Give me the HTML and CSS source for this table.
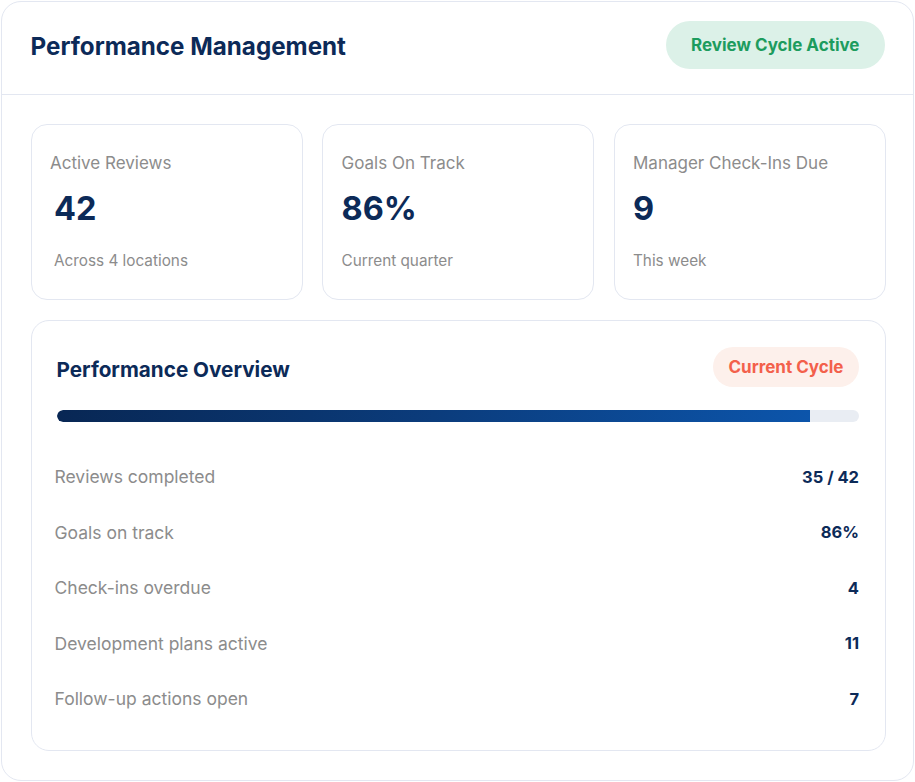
FILE: index.html
```html
<!DOCTYPE html>
<html lang="en">
<head>
<meta charset="utf-8">
<title>Performance Management</title>
<link rel="stylesheet" href="styles.css">
</head>
<body>
<div class="panel">
  <header class="panel-head">
    <h1 class="panel-title">Performance Management</h1>
    <span class="badge badge-green">Review Cycle Active</span>
  </header>
  <div class="panel-body">
    <div class="stats">
      <div class="stat stat-indent">
        <div class="stat-label">Active Reviews</div>
        <div class="stat-value">42</div>
        <div class="stat-sub">Across 4 locations</div>
      </div>
      <div class="stat">
        <div class="stat-label">Goals On Track</div>
        <div class="stat-value">86%</div>
        <div class="stat-sub">Current quarter</div>
      </div>
      <div class="stat">
        <div class="stat-label">Manager Check-Ins Due</div>
        <div class="stat-value">9</div>
        <div class="stat-sub">This week</div>
      </div>
    </div>
    <section class="overview">
      <div class="overview-head">
        <h2 class="overview-title">Performance Overview</h2>
        <span class="badge badge-coral">Current Cycle</span>
      </div>
      <div class="bar"><div class="bar-fill" style="width: 93.9%"></div></div>
      <ul class="rows">
        <li class="row"><span class="row-label">Reviews completed</span><span class="row-value">35 / 42</span></li>
        <li class="row"><span class="row-label">Goals on track</span><span class="row-value">86%</span></li>
        <li class="row"><span class="row-label">Check-ins overdue</span><span class="row-value">4</span></li>
        <li class="row"><span class="row-label">Development plans active</span><span class="row-value">11</span></li>
        <li class="row"><span class="row-label">Follow-up actions open</span><span class="row-value">7</span></li>
      </ul>
    </section>
  </div>
</div>
</body>
</html>
```

FILE: styles.css
```css
* { box-sizing: border-box; }
html, body { margin: 0; padding: 0; background: #ffffff; }
body {
  font-family: Inter, "Noto Sans", "Liberation Sans", sans-serif;
  color: #0c2a58;
  padding: 1px;
}
.panel {
  width: 913px;
  height: 780px;
  border: 1.5px solid #e3e7f1;
  border-radius: 20px;
  background: #fff;
  overflow: hidden;
}
.panel-head {
  display: flex;
  align-items: center;
  justify-content: space-between;
  padding: 19px 28.5px 25px 28.5px;
  border-bottom: 1.5px solid #e3e7f1;
}
.panel-title {
  margin: 2px 0 0;
  font-size: 24.2px;
  font-weight: 700;
  color: #0c2a58;
}
.badge {
  display: inline-flex;
  align-items: center;
  border-radius: 999px;
  font-weight: 700;
  font-size: 17px;
}
.badge-green {
  height: 48px;
  padding: 0 25px;
  background: #dcf1e8;
  color: #1d9c5e;
}
.badge-coral {
  height: 40px;
  padding: 0 15.5px;
  background: #fdf0eb;
  color: #f3604b;
}
.panel-body {
  padding: 28.5px 27.5px 0 28.5px;
}
.stats {
  display: grid;
  grid-template-columns: 1fr 1fr 1fr;
  gap: 19.5px;
}
.stat {
  height: 176px;
  border: 1.5px solid #e3e7f1;
  border-radius: 16px;
  padding: 27px 18px 0 18.5px;
}
.stat-label {
  font-size: 17px;
  line-height: 22px;
  color: #8c8c8c;
}
.stat-value {
  margin-top: 15px;
  font-size: 32.5px;
  line-height: 40px;
  font-weight: 700;
  color: #0c2a58;
}
.stat-sub {
  margin-top: 22.5px;
  font-size: 15.3px;
  line-height: 20px;
  color: #8c8c8c;
}
.stat-indent .stat-value,
.stat-indent .stat-sub { padding-left: 4px; }
.overview {
  margin-top: 20px;
  height: 431.5px;
  border: 1.5px solid #e3e7f1;
  border-radius: 18px;
  padding: 26.5px 25.5px 0 25px;
}
.overview-head {
  display: flex;
  align-items: center;
  justify-content: space-between;
}
.overview-title {
  margin: 5px 0 0;
  font-size: 20.7px;
  font-weight: 700;
  color: #0c2a58;
}
.bar {
  margin-top: 23px;
  height: 12px;
  border-radius: 6px;
  background: #e9edf3;
  overflow: hidden;
}
.bar-fill {
  height: 100%;
  border-radius: 6px 0 0 6px;
  background: linear-gradient(90deg, #082754 0%, #0b3c7c 50%, #0c55ab 100%);
}
.rows {
  list-style: none;
  margin: 27px 0 0;
  padding: 0;
}
.row {
  display: flex;
  align-items: center;
  justify-content: space-between;
  height: 55.5px;
}
.row-label {
  margin-left: -2px;
  font-size: 17.5px;
  color: #8c8c8c;
}
.row-value {
  font-size: 16.5px;
  font-weight: 700;
  color: #0c2a58;
}
```
